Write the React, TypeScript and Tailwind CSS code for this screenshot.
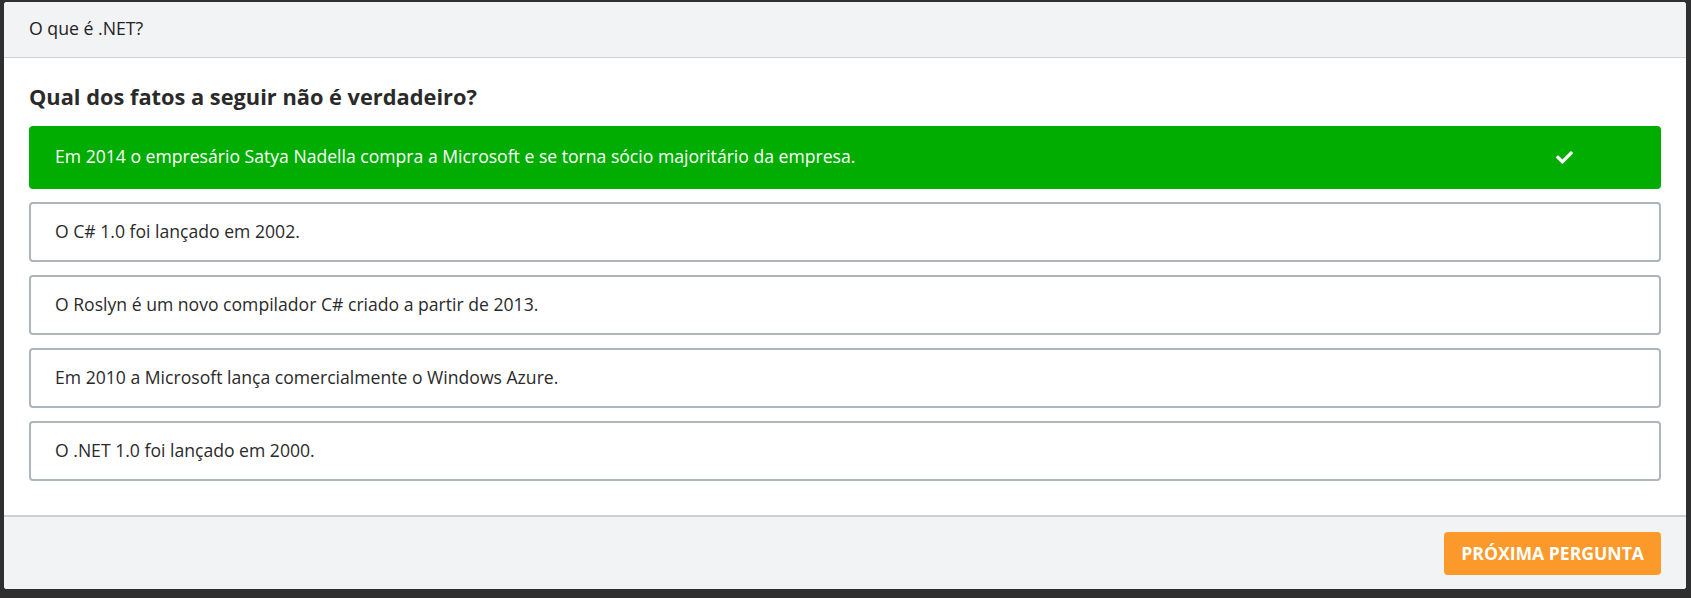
import React from "react";
import { FaCheck } from "react-icons/fa";

const options = [
  { text: "Em 2014 o empresário Satya Nadella compra a Microsoft e se torna sócio majoritário da empresa.", correct: true },
  { text: "O C# 1.0 foi lançado em 2002.", correct: false },
  { text: "O Roslyn é um novo compilador C# criado a partir de 2013.", correct: false },
  { text: "Em 2010 a Microsoft lança comercialmente o Windows Azure.", correct: false },
  { text: "O .NET 1.0 foi lançado em 2000.", correct: false },
];

export default function App() {
  return (
    <div
      className="h-[598px] w-full bg-[#2f2f2f] pt-[2px] pl-[4px] pr-[5px]"
      style={{ fontFamily: '"Open Sans", "Noto Sans", sans-serif' }}
    >
      <div className="flex h-[587px] flex-col overflow-hidden rounded-[3px] bg-white">
        <div className="flex h-[56px] items-center border-b border-[#cfd3d8] bg-[#f2f3f5] pl-[25px] pb-[2px] text-[17.7px] text-[#222]">
          O que é .NET?
        </div>
        <div className="flex-1 px-[25px] pt-[20px]">
          <h2 className="mb-[10px] text-[21.8px] font-bold leading-[38px] text-[#2a2a2a]">
            Qual dos fatos a seguir não é verdadeiro?
          </h2>
          <div className="flex flex-col gap-[13px]">
            {options.map((o, i) =>
              o.correct ? (
                <div
                  key={i}
                  className="flex h-[63px] items-center rounded-[4px] bg-[#00ad00] pl-[26px] pr-[88px] text-[17.6px] text-white"
                >
                  <span className="flex-1 pb-[2px]">{o.text}</span>
                  <FaCheck className="h-[17px] w-[17px]" />
                </div>
              ) : (
                <div
                  key={i}
                  className="flex h-[60px] items-center rounded-[4px] border-2 border-[#adb5bd] pl-[24px] text-[17.6px] text-[#2a2a2a]"
                >
                  <span className="pb-[2px]">{o.text}</span>
                </div>
              )
            )}
          </div>
        </div>
        <div className="flex h-[74px] items-start justify-end border-t-2 border-[#cbd0d5] bg-[#f2f3f5] pr-[25px] pt-[15px]">
          <button className="h-[43px] rounded-[4px] bg-[#fb992b] px-[17px] text-[17.6px] font-bold text-white">
            PRÓXIMA PERGUNTA
          </button>
        </div>
      </div>
    </div>
  );
}
